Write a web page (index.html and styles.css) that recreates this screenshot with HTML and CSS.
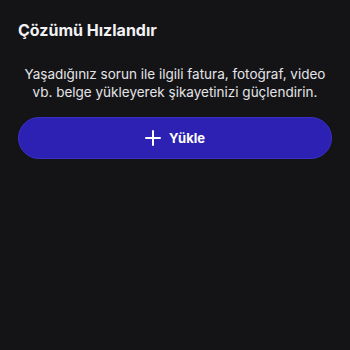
FILE: index.html
```html
<!DOCTYPE html>
<html lang="tr">
<head>
<meta charset="utf-8">
<link rel="stylesheet" href="styles.css">
</head>
<body>
<main class="panel">
  <h1 class="title">Çözümü Hızlandır</h1>
  <p class="desc">Yaşadığınız sorun ile ilgili fatura, fotoğraf, video vb. belge yükleyerek şikayetinizi güçlendirin.</p>
  <button class="upload" type="button">
    <svg class="plus" width="16" height="16" viewBox="0 0 16 16" aria-hidden="true"><path d="M8 1v14M1 8h14" stroke="#ffffff" stroke-width="2" stroke-linecap="round" fill="none"/></svg>
    <span>Yükle</span>
  </button>
</main>
</body>
</html>
```
FILE: styles.css
```css
html, body {
  margin: 0;
  padding: 0;
  background: #141417;
  height: 100%;
}
body {
  font-family: Inter, "Noto Sans", sans-serif;
  color: #ffffff;
}
.panel {
  display: flex;
  flex-direction: column;
  padding: 20px 18px 0 18px;
}
.title {
  margin: 0;
  font-size: 16px;
  font-weight: 700;
  line-height: 20px;
  color: #f2f2f4;
}
.desc {
  margin: 25px 0 0 0;
  font-size: 13.5px;
  line-height: 18px;
  text-align: center;
  color: #e4e4e8;
  padding: 0 4px;
}
.upload {
  margin-top: 16px;
  height: 42px;
  border: 1px solid #3a30c4;
  border-radius: 21px;
  background: #2d21b3;
  color: #ffffff;
  font-family: Inter, "Noto Sans", sans-serif;
  font-size: 13px;
  font-weight: 700;
  display: flex;
  align-items: center;
  justify-content: center;
  gap: 8px;
}
.plus {
  display: block;
}
```
